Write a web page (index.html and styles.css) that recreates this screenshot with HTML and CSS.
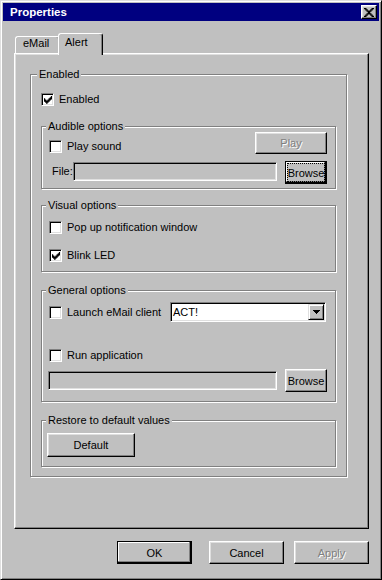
FILE: index.html
```html
<!DOCTYPE html>
<html lang="en">
<head>
    <meta charset="UTF-8">
    <title>Properties</title>
    <link rel="stylesheet" href="styles.css">
</head>
<body>

<div class="window">
    <div class="titlebar">
        <span class="title">Properties</span>
        <button type="button" class="close-btn">
            <svg width="10" height="9" viewBox="0 0 8 7" preserveAspectRatio="none"><path d="M0 0h2v1H0zM6 0h2v1H6zM1 1h2v1H1zM5 1h2v1H5zM2 2h4v1H2zM3 3h2v1H3zM2 4h4v1H2zM1 5h2v1H1zM5 5h2v1H5zM0 6h2v1H0zM6 6h2v1H6z" fill="#000"/></svg>
        </button>
    </div>

    <div class="tabs">
        <div class="tab">eMail</div>
        <div class="tab active">Alert</div>
    </div>

    <div class="panel">
        <fieldset class="group outer-group">
            <legend>Enabled</legend>
            <label class="check">
                <span class="box"><svg width="8" height="8" viewBox="0 0 7 7"><polygon points="0,2 1,2 1,3 2,3 2,4 3,4 3,3 4,3 4,2 5,2 5,1 6,1 6,0 7,0 7,3 6,3 6,4 5,4 5,5 4,5 4,6 3,6 3,7 2,7 2,6 1,6 1,5 0,5" fill="#000"/></svg></span>
                Enabled
            </label>

            <fieldset class="group inner-group audible">
                <legend>Audible options</legend>
                <div class="row row-play">
                    <label class="check"><span class="box"></span>Play sound</label>
                    <button type="button" class="btn disabled play-btn">Play</button>
                </div>
                <div class="row row-file">
                    <span class="field-label">File:</span>
                    <span class="field file-field"></span>
                    <button type="button" class="btn default focused browse-btn">Browse</button>
                </div>
            </fieldset>

            <fieldset class="group inner-group visual">
                <legend>Visual options</legend>
                <label class="check first"><span class="box"></span>Pop up notification window</label>
                <label class="check second">
                    <span class="box"><svg width="8" height="8" viewBox="0 0 7 7"><polygon points="0,2 1,2 1,3 2,3 2,4 3,4 3,3 4,3 4,2 5,2 5,1 6,1 6,0 7,0 7,3 6,3 6,4 5,4 5,5 4,5 4,6 3,6 3,7 2,7 2,6 1,6 1,5 0,5" fill="#000"/></svg></span>
                    Blink LED
                </label>
            </fieldset>

            <fieldset class="group inner-group general">
                <legend>General options</legend>
                <div class="row row-launch">
                    <label class="check"><span class="box"></span>Launch eMail client</label>
                    <div class="combo">
                        <span class="combo-text">ACT!</span>
                        <span class="combo-btn">
                            <svg width="7" height="4" viewBox="0 0 7 4"><path d="M0 0h7v1H0zM1 1h5v1H1zM2 2h3v1H2zM3 3h1v1H3z" fill="#000"/></svg>
                        </span>
                    </div>
                </div>
                <div class="row row-run">
                    <label class="check"><span class="box"></span>Run application</label>
                </div>
                <div class="row row-path">
                    <span class="field path-field"></span>
                    <button type="button" class="btn browse-btn">Browse</button>
                </div>
            </fieldset>

            <fieldset class="group inner-group restore">
                <legend>Restore to default values</legend>
                <button type="button" class="btn default-btn">Default</button>
            </fieldset>
        </fieldset>
    </div>

    <div class="actions">
        <button type="button" class="btn default action-btn">OK</button>
        <button type="button" class="btn action-btn cancel-btn">Cancel</button>
        <button type="button" class="btn disabled action-btn apply-btn">Apply</button>
    </div>
</div>

</body>
</html>
```

FILE: styles.css
```css
body {
    margin: 0;
    background-color: #c0c0c0;
    font-family: "Liberation Sans", Arial, sans-serif;
    font-size: 11px;
    color: #000;
}
.window {
    width: 382px;
    height: 580px;
    box-sizing: border-box;
    padding: 2px;
    background-color: #c0c0c0;
    border: 1px solid;
    border-color: #dfdfdf #000 #000 #dfdfdf;
    box-shadow: inset 1px 1px #fff, inset -1px -1px #808080;
}

/* title bar */
.titlebar {
    height: 18px;
    background-color: #000080;
    display: flex;
    align-items: center;
    padding-left: 7px;
}
.title {
    color: #fff;
    font-weight: bold;
    font-size: 11.5px;
}
.close-btn {
    margin-left: auto;
    margin-right: 2px;
    width: 16px;
    height: 14px;
    padding: 0;
    background-color: #c0c0c0;
    border: 1px solid;
    border-color: #fff #000 #000 #fff;
    box-shadow: inset -1px -1px #808080, inset 1px 1px #dfdfdf;
    display: flex;
    align-items: center;
    justify-content: center;
}

/* tabs */
.tabs {
    display: flex;
    align-items: flex-end;
    height: 20px;
    margin: 12px 0 0 11px;
    padding-left: 1px;
}
.tab {
    width: 45px;
    height: 17px;
    box-sizing: border-box;
    padding: 0 0 0 7px;
    line-height: 13px;
    background-color: #c0c0c0;
    border: 1px solid;
    border-bottom: none;
    border-color: #fff #000 transparent #fff;
    border-radius: 3px 3px 0 0;
    box-shadow: inset -1px 0 #808080;
}
.tab.active {
    height: 22px;
    margin-left: -2px;
    margin-bottom: -2px;
    padding: 2px 0 0 6px;
    position: relative;
    z-index: 1;
}

/* tab page */
.panel {
    width: 355px;
    height: 476px;
    margin-left: 11px;
    box-sizing: border-box;
    padding: 14px 0 0 15px;
    border: 1px solid;
    border-color: #fff #000 #000 #fff;
    box-shadow: inset -1px -1px #808080, inset 1px 1px #dfdfdf;
}

/* group boxes */
.group {
    margin: 0;
    min-width: 0;
    box-sizing: border-box;
    border: 1px solid #808080;
    box-shadow: 1px 1px 0 #fff, inset 1px 1px 0 #fff;
}
.group legend {
    padding: 0 2px;
    line-height: 13px;
    background-color: #c0c0c0;
}
.outer-group {
    width: 317px;
    padding: 12px 10px 9px 10px;
}
.outer-group > legend {
    margin-left: -4px;
}
.inner-group {
    width: 295px;
    padding: 0 8px 9px 7px;
}
.inner-group legend {
    margin-left: -3px;
}
.audible {
    margin-top: 14px;
    padding-bottom: 4px;
}
.visual {
    margin-top: 10px;
}
.general,
.restore {
    margin-top: 12px;
}

/* checkboxes */
.check {
    display: flex;
    align-items: center;
    line-height: 13px;
}
.box {
    flex: none;
    width: 13px;
    height: 13px;
    box-sizing: border-box;
    margin-right: 5px;
    background-color: #fff;
    border: 1px solid;
    border-color: #808080 #fff #fff #808080;
    box-shadow: inset 1px 1px #000, inset -1px -1px #dfdfdf;
    display: flex;
    align-items: center;
    justify-content: center;
}
.visual .first {
    margin-top: 9px;
}
.visual .second {
    margin-top: 15px;
}

/* rows */
.row {
    display: flex;
}
.row-play {
    margin-top: -1px;
    height: 22px;
    justify-content: space-between;
    align-items: flex-end;
}
.row-play .check {
    margin-bottom: 1px;
}
.row-file {
    margin-top: 7px;
    align-items: flex-start;
}
.field-label {
    line-height: 19px;
    margin: 1px 0 0 3px;
}
.row-launch {
    margin-top: 5px;
    align-items: center;
}
.row-run {
    margin-top: 27px;
}
.row-path {
    margin-top: 7px;
    align-items: center;
}

/* text fields */
.field {
    height: 19px;
    box-sizing: border-box;
    background-color: #c0c0c0;
    border: 1px solid;
    border-color: #808080 #fff #fff #808080;
    box-shadow: inset 1px 1px #000, inset -1px -1px #dfdfdf;
}
.file-field {
    flex: 1;
    margin-top: 1px;
}
.path-field {
    width: 229px;
    margin-left: -1px;
}
.combo {
    width: 156px;
    height: 20px;
    box-sizing: border-box;
    margin-left: auto;
    margin-right: 1px;
    padding-left: 2px;
    background-color: #fff;
    border: 1px solid;
    border-color: #808080 #fff #fff #808080;
    box-shadow: inset 1px 1px #000, inset -1px -1px #dfdfdf;
    display: flex;
    align-items: center;
}
.combo-btn {
    margin-left: auto;
    margin-right: 1px;
    width: 16px;
    height: 16px;
    box-sizing: border-box;
    background-color: #c0c0c0;
    border: 1px solid;
    border-color: #dfdfdf #000 #000 #dfdfdf;
    box-shadow: inset 1px 1px #fff, inset -1px -1px #808080;
    display: flex;
    align-items: center;
    justify-content: center;
}

/* buttons */
.btn {
    font: inherit;
    color: #000;
    padding: 0;
    background-color: #c0c0c0;
    border: 1px solid;
    border-color: #fff #000 #000 #fff;
    box-shadow: inset -1px -1px #808080, inset 1px 1px #dfdfdf;
}
.btn.default {
    border-color: #000;
    box-shadow: inset -1px -1px #000, inset -2px -2px #808080, inset 1px 1px #fff;
}
.btn.focused {
    outline: 1px dotted #000;
    outline-offset: -3px;
}
.btn.disabled {
    color: #808080;
    text-shadow: 1px 1px 0 #fff;
}
.play-btn {
    width: 72px;
    height: 22px;
}
.browse-btn {
    width: 42px;
    height: 23px;
    margin-left: auto;
}
.row-file .browse-btn {
    margin-left: 8px;
}
.default-btn {
    width: 88px;
    height: 24px;
    margin: 6px 0 0 -2px;
}

/* dialog buttons */
.actions {
    display: flex;
    margin-top: 12px;
    padding-left: 114px;
}
.action-btn {
    width: 75px;
    height: 23px;
}
.cancel-btn {
    margin-left: 17px;
}
.apply-btn {
    margin-left: 10px;
}
```
